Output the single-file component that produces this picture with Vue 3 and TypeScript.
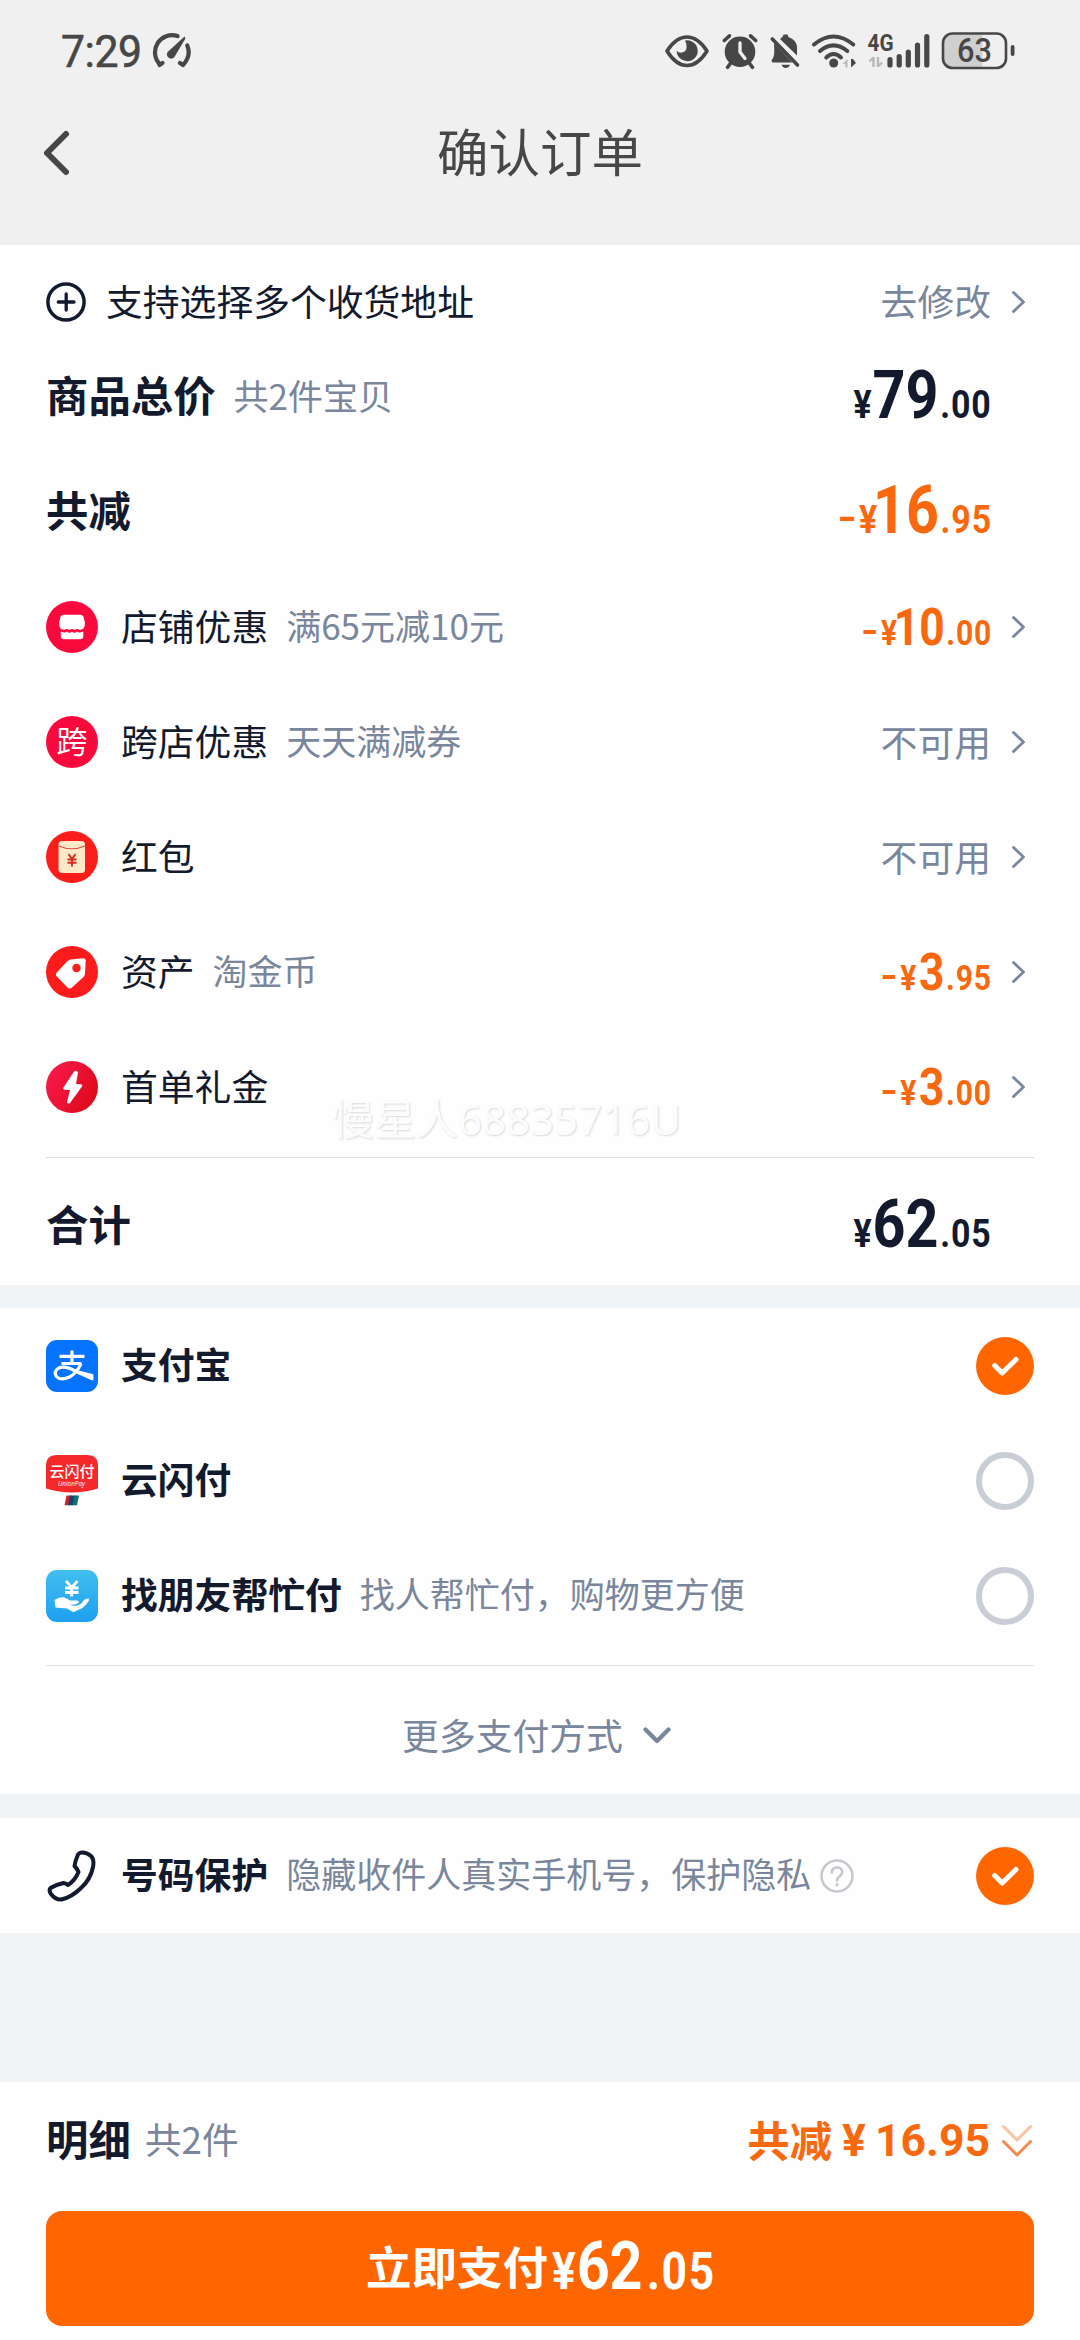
<script setup lang="ts">
interface Amount {
  sign?: string
  int: string
  dec: string
}

interface DiscountRow {
  icon: 'shop' | 'cross' | 'packet' | 'tag' | 'bolt'
  label: string
  note?: string
  amount?: Amount
  status?: string
}

interface PayRow {
  icon: 'alipay' | 'unionpay' | 'friend'
  label: string
  note?: string
  checked: boolean
}

const discounts: DiscountRow[] = [
  { icon: 'shop', label: '店铺优惠', note: '满65元减10元', amount: { sign: '-', int: '10', dec: '.00' } },
  { icon: 'cross', label: '跨店优惠', note: '天天满减券', status: '不可用' },
  { icon: 'packet', label: '红包', status: '不可用' },
  { icon: 'tag', label: '资产', note: '淘金币', amount: { sign: '-', int: '3', dec: '.95' } },
  { icon: 'bolt', label: '首单礼金', amount: { sign: '-', int: '3', dec: '.00' } },
]

const payments: PayRow[] = [
  { icon: 'alipay', label: '支付宝', checked: true },
  { icon: 'unionpay', label: '云闪付', checked: false },
  { icon: 'friend', label: '找朋友帮忙付', note: '找人帮忙付，购物更方便', checked: false },
]
</script>

<template>
  <div class="page">
    <header class="header">
      <div class="status-bar">
        <span class="clock">7:29</span>
        <svg class="gauge" width="40" height="36" viewBox="0 0 40 36" fill="none">
          <path d="M9 32.5 A17.2 17.2 0 0 1 26.5 4" stroke="#474747" stroke-width="4.2" stroke-linecap="round" />
          <path d="M8.5 33 L11.5 31" stroke="#474747" stroke-width="4.2" stroke-linecap="round" />
          <path d="M36.3 13.5 Q40.5 24 32 33 L29 31" stroke="#474747" stroke-width="4.2" stroke-linecap="round" stroke-linejoin="round" />
          <path d="M33.5 4.5 Q35 6 34 7.2 L24 24 A4.2 4.2 0 1 1 18 18.8 Z" fill="#474747" />
        </svg>
        <span class="spacer"></span>
        <svg class="indicators" width="355" height="48" viewBox="0 -5 355 48" fill="none">
          <!-- eye -->
          <path d="M3 19 Q12 5 23 5 Q34 5 43 19 Q34 33.500 23 33.500 Q12 33.500 3 19Z" stroke="#474747" stroke-width="3.600" stroke-linejoin="round" />
          <path d="M21 8.500 A10.500 10.500 0 1 1 12.700 18.500 C15.500 22.500 22 20.500 22.500 16 Q23 11.500 21 8.500Z" fill="#474747" />
          <!-- alarm -->
          <circle cx="76" cy="19.800" r="15.300" fill="#474747" />
          <path d="M60.300 8.500 L65.500 3.800 M91.700 8.500 L86.500 3.800 M66 32 L63.500 35.300 M86 32 L88.500 35.300" stroke="#474747" stroke-width="3.600" stroke-linecap="round" />
          <path d="M76 11 V20 L81 26.500" stroke="#f0f0f0" stroke-width="3.300" stroke-linecap="round" stroke-linejoin="round" />
          <!-- muted bell -->
          <path d="M110 11 L128.500 30.500 H108.500 Q106.500 28.500 108.500 27 Q111 24 110 11Z" fill="#474747" />
          <path d="M116 7 Q119 5 119.800 2.500 H123.500 L124.500 5 Q132.500 8 133 15 V23.500Z" fill="#474747" />
          <path d="M117.500 32.800 H126 Q124.500 36 121.700 36 Q119 36 117.500 32.800Z" fill="#474747" />
          <path d="M108.300 7 L133.500 33" stroke="#474747" stroke-width="3.600" stroke-linecap="round" />
          <!-- wifi -->
          <path d="M150 12.500 Q169.500 -3.500 189.300 12.500" stroke="#474747" stroke-width="4" stroke-linecap="round" />
          <path d="M156 19 Q169.500 7.800 183.300 19" stroke="#474747" stroke-width="4" stroke-linecap="round" />
          <path d="M162.300 25.500 Q169.500 18.500 177 25.500" stroke="#474747" stroke-width="4" stroke-linecap="round" />
          <circle cx="169.700" cy="31" r="4.500" fill="#474747" />
          <path d="M183.500 27 V35.500 H181.500 V32 H178.500Z" fill="#b8b8b8" />
          <path d="M187 35.500 V27 H189 L192 31Z" fill="#474747" />
          <!-- mobile signal -->
          <text x="203.500" y="18.700" class="net" textLength="26" lengthAdjust="spacingAndGlyphs">4G</text>
          <path d="M209.500 25 V35 M209.500 25.500 L205.500 29.500 M214 25 V35 M214 34.500 L218 30.500" stroke="#b8b8b8" stroke-width="2.400" />
          <path d="M226 27.500 V33 M235.200 24.500 V33 M244.300 20 V33 M253.500 13 V33 M262.800 4.500 V33" stroke="#474747" stroke-width="5.200" stroke-linecap="round" />
          <!-- battery -->
          <path d="M289 2.500 H318.500 V35 H289 Q280 35 280 27 V10.500 Q280 2.500 289 2.500Z" fill="#cfcfcf" />
          <rect x="279" y="1.500" width="63" height="34.500" rx="9.500" stroke="#474747" stroke-width="2.600" />
          <rect x="346.700" y="13" width="3.800" height="11" rx="1.900" fill="#474747" />
          <text x="293" y="30.300" class="level" textLength="35" lengthAdjust="spacingAndGlyphs">63</text>
        </svg>
      </div>
      <div class="title-bar">
        <svg class="back" width="34" height="52" viewBox="0 0 34 52" fill="none">
          <path d="M26 7 L7 26 L26 45" stroke="#474747" stroke-width="6" stroke-linecap="round" stroke-linejoin="round" />
        </svg>
        <h1 class="title">确认订单</h1>
      </div>
    </header>

    <section class="card summary">
      <div class="row address">
        <svg class="plus" width="40" height="40" viewBox="0 0 40 40" fill="none" stroke="#131a2d" stroke-linecap="round">
          <circle cx="20" cy="20" r="18.100" stroke-width="3.500" />
          <path d="M12.300 20 H28 M20.200 12 V28" stroke-width="3.300" />
        </svg>
        <span class="label">支持选择多个收货地址</span>
        <span class="spacer"></span>
        <span class="muted">去修改</span>
        <svg class="chev" width="16" height="24" viewBox="0 0 16 24" fill="none"><path d="M2.500 2.500 L12.500 12 L2.500 21.500" /></svg>
      </div>

      <div class="row">
        <span class="heading">商品总价</span>
        <span class="note">共2件宝贝</span>
        <span class="spacer"></span>
        <span class="amount large"><i class="yen">¥</i><b class="int">79</b><i class="dec">.00</i></span>
      </div>
      <div class="row">
        <span class="heading">共减</span>
        <span class="spacer"></span>
        <span class="amount large off"><i class="sign">-</i><i class="yen">¥</i><b class="int lead-one">16</b><i class="dec">.95</i></span>
      </div>

      <div v-for="row in discounts" :key="row.label" class="row">
        <svg class="icon" width="52" height="52" viewBox="0 0 52 52" fill="none">
          <template v-if="row.icon === 'shop'">
            <circle cx="26" cy="26" r="26" fill="#fa0a3c" />
            <path d="M18 13.800 H34 Q37 13.800 37.600 16.500 L38.800 21 Q39.500 27.500 35.500 28.500 Q33.500 29.500 31 27.700 Q28.500 30 26 27.700 Q23.500 30 21 27.700 Q18.500 29.500 16.500 28.500 Q12.500 27.500 13.200 21 L14.400 16.500 Q15 13.800 18 13.800Z" fill="#fff" />
            <path d="M14.800 30.500 H15.500 Q18.500 32.300 21 30.500 Q23.500 32.800 26 30.700 Q28.500 32.800 31 30.500 Q33.500 32.300 36.500 30.500 H37.300 V35 Q37.300 38.300 34 38.300 H18 Q14.800 38.300 14.800 35Z" fill="#fff" />
          </template>
          <template v-else-if="row.icon === 'cross'">
            <circle cx="26" cy="26" r="26" fill="#fa0a3c" />
            <text x="26" y="37" class="glyph">跨</text>
          </template>
          <template v-else-if="row.icon === 'packet'">
            <circle cx="26" cy="26" r="26" fill="#fb1d1a" />
            <rect x="12.500" y="10" width="26.500" height="32" rx="3.500" fill="#fee9c8" />
            <path d="M12.500 15 Q26 20.500 39 15" stroke="#d9503a" stroke-width="1.200" />
            <path d="M22.500 23 L26 28 L29.500 23 M26 28 V35.500 M21.500 28.500 H30.500 M21.500 31.800 H30.500" stroke="#d92a1c" stroke-width="1.900" />
          </template>
          <template v-else-if="row.icon === 'tag'">
            <circle cx="26" cy="26" r="26" fill="#fd1b1b" />
            <path d="M24.500 13.500 L37 12.300 Q39.800 12.300 39.700 15 L39 27.500 Q38.800 29.500 37.500 31 L26 41.500 Q23.500 43.700 21.500 41.500 L10.800 30.500 Q8.800 28.500 11 26.300 L21 15.500 Q22.500 13.800 24.500 13.500Z" fill="#fff" />
            <circle cx="30.500" cy="22" r="4.200" fill="#fd1b1b" />
          </template>
          <template v-else>
            <defs>
              <linearGradient id="boltBg" x1="0" y1="0" x2="1" y2="0.500">
                <stop offset="0" stop-color="#fb1c52" />
                <stop offset="1" stop-color="#df0a1d" />
              </linearGradient>
            </defs>
            <circle cx="26" cy="26" r="26" fill="url(#boltBg)" />
            <path d="M28 10.500 L17.500 26.500 Q16.500 28.500 18.500 28.800 L24 29 L21 41 Q21.500 43.500 24 42 L36 25.500 Q37 23.700 35 23.300 L30 23 L32 11.500 Q31 8.500 28 10.500Z" fill="#fff" />
          </template>
        </svg>
        <span class="label">{{ row.label }}</span>
        <span v-if="row.note" class="note">{{ row.note }}</span>
        <span class="spacer"></span>
        <span v-if="row.amount" class="amount off"><i class="sign">{{ row.amount.sign }}</i><i class="yen">¥</i><b class="int" :class="{ 'lead-one': row.amount.int.startsWith('1') }">{{ row.amount.int }}</b><i class="dec">{{ row.amount.dec }}</i></span>
        <span v-else class="muted low">{{ row.status }}</span>
        <svg class="chev" width="16" height="24" viewBox="0 0 16 24" fill="none"><path d="M2.500 2.500 L12.500 12 L2.500 21.500" /></svg>
      </div>

      <div class="rule"></div>
      <div class="row total">
        <span class="heading">合计</span>
        <span class="spacer"></span>
        <span class="amount large"><i class="yen">¥</i><b class="int">62</b><i class="dec">.05</i></span>
      </div>
      <span class="watermark">慢星人68835716U</span>
    </section>

    <section class="card payment">
      <div v-for="row in payments" :key="row.label" class="row">
        <svg class="icon" width="52" height="52" viewBox="0 0 52 52" fill="none">
          <template v-if="row.icon === 'alipay'">
            <rect width="52" height="52" rx="11" fill="#0673fe" />
            <path d="M13.500 16.300 H38.500 M26 10.500 V23 M15.500 23.500 H35.500" stroke="#fff" stroke-width="3.200" />
            <path d="M35 23.500 Q31 33 23.500 37 Q14.500 41 10.300 36.500 Q7.500 31.500 12 28.500 Q18.500 25 29 31 L47 39" stroke="#fff" stroke-width="3.200" />
            <path d="M29 29.500 L47.300 34.300 V40.500 L30 32.500Z" fill="#fff" />
          </template>
          <template v-else-if="row.icon === 'unionpay'">
            <path d="M11 0 H41 Q52 0 52 11 V33.500 Q26 41.500 0 33.500 V11 Q0 0 11 0Z" fill="#f5282a" />
            <text x="26" y="21.500" class="up-name">云闪付</text>
            <text x="12" y="30.500" class="up-sub" textLength="27" lengthAdjust="spacingAndGlyphs">UnionPay</text>
            <path d="M20.500 40.500 H25.500 L23.500 50.300 H18.500Z" fill="#c9252b" />
            <path d="M24 40.500 H29.500 L27.500 50.300 H22Z" fill="#1b3f73" />
            <path d="M28.500 40.500 H33 L31 50.300 H26.500Z" fill="#08766f" />
          </template>
          <template v-else>
            <defs>
              <linearGradient id="friendBg" x1="0" y1="0" x2="0" y2="1">
                <stop offset="0" stop-color="#41bfee" />
                <stop offset="1" stop-color="#1e9ff0" />
              </linearGradient>
            </defs>
            <rect width="52" height="52" rx="11" fill="url(#friendBg)" />
            <path d="M20 11 L25.700 17.500 L31.500 11 M25.700 17.500 V26.500 M19 18 H32.500 M19 22.500 H32.500" stroke="#fff" stroke-width="2.800" />
            <path d="M8.500 30 Q13 26.500 18.500 27.500 L24 30.500 H31 Q33.500 31 32.500 33 Q29 35.300 23.500 34.500 Q30 37.500 35.500 33.500 Q38 28.500 42.500 28.300 L43 30.500 Q38 38 33 39.500 L27.500 42.300 L21 38.500 L9.500 37.500Z" fill="#fff" />
          </template>
        </svg>
        <span class="label strong">{{ row.label }}</span>
        <span v-if="row.note" class="note">{{ row.note }}</span>
        <span class="spacer"></span>
        <span class="radio" :class="{ on: row.checked }">
          <svg v-if="row.checked" width="58" height="58" viewBox="0 0 58 58" fill="none"><path d="M18.700 28.500 L26.200 36 L40 22.500" stroke="#fff" stroke-width="5" stroke-linecap="round" stroke-linejoin="round" /></svg>
        </span>
      </div>
      <div class="rule"></div>
      <div class="more">
        <span class="muted">更多支付方式</span>
        <svg width="32" height="22" viewBox="0 0 32 22" fill="none"><path d="M4.500 4.500 L16 16 L27.500 4.500" stroke="#7a869c" stroke-width="4.300" stroke-linecap="round" stroke-linejoin="round" /></svg>
      </div>
    </section>

    <section class="card privacy">
      <div class="row">
        <svg class="icon" width="52" height="52" viewBox="0 0 52 52" fill="none">
          <path d="M34.500 2.700 Q40 1.800 45 6 Q48.500 9.500 47 17 Q44.500 29.500 35 38 Q26 47 15.500 49.500 Q9.500 50 5 44 Q2.500 40.500 4.500 38 Q10 34.500 17.500 33 Q20.500 33.500 22 35 Q29 30.500 32.500 22 Q31 18.500 28.500 16 Q29.500 10 32 4.500 Q33 3 34.500 2.700Z" stroke="#131a2d" stroke-width="4" stroke-linejoin="round" />
        </svg>
        <span class="label strong">号码保护</span>
        <span class="note">隐藏收件人真实手机号，保护隐私</span>
        <svg class="help" width="34" height="34" viewBox="0 0 34 34" fill="none" stroke="#c5c8cd">
          <circle cx="17" cy="17" r="15.500" stroke-width="2.500" />
          <path d="M11.800 13.500 Q12 8.500 17 8.500 Q22 8.500 22.200 13 Q22.200 15.500 19 17.700 Q17 19 17 21.500" stroke-width="2.500" stroke-linecap="round" />
          <circle cx="17" cy="25.700" r="1" stroke-width="1.500" />
        </svg>
        <span class="spacer"></span>
        <span class="radio on">
          <svg width="58" height="58" viewBox="0 0 58 58" fill="none"><path d="M18.700 28.500 L26.200 36 L40 22.500" stroke="#fff" stroke-width="5" stroke-linecap="round" stroke-linejoin="round" /></svg>
        </span>
      </div>
    </section>

    <footer class="footer">
      <div class="detail">
        <span class="heading">明细</span>
        <span class="count">共2件</span>
        <span class="spacer"></span>
        <span class="saved">共减</span><span class="saved-yen">¥</span><span class="saved-num">16.95</span>
        <svg class="double" width="34" height="36" viewBox="0 0 34 36" fill="none" stroke-width="3" stroke-linecap="round" stroke-linejoin="round">
          <path d="M3.500 3.500 L17 17 L30.500 3.500" stroke="#fbc1a0" />
          <path d="M3.500 18.500 L17 32 L30.500 18.500" stroke="#f58a4e" />
        </svg>
      </div>
      <button class="pay" type="button">
        <span class="pay-label">立即支付</span>
        <span class="amount pay-amount"><i class="yen">¥</i><b class="int">62</b><i class="dec">.05</i></span>
      </button>
    </footer>
  </div>
</template>

<style>
body {
  background: #f0f4f7;
}
</style>

<style scoped>
.page {
  width: 1080px;
  height: 2340px;
  overflow: hidden;
  display: flex;
  flex-direction: column;
  background: #f0f4f7;
  font-family: "Noto Sans CJK SC", sans-serif;
  color: #131a2d;
}
.spacer { flex: 1; }

.header {
  height: 245px;
  flex: none;
  background: #f0f0f0;
  color: #474747;
}
.status-bar {
  height: 101px;
  display: flex;
  align-items: center;
  padding: 0 61px;
}
.clock {
  width: 90px;
  padding-top: 2px;
  font: 400 45px/60px Roboto, sans-serif;
  letter-spacing: -0.5px;
  -webkit-text-stroke: 0.6px #474747;
  transform: scaleX(0.95);
  transform-origin: left;
}
.gauge { margin-top: -1px; }
.indicators { flex: none; overflow: visible; }
.net { font: 700 23px Roboto, sans-serif; fill: #474747; }
.level { font: 500 33px Roboto, sans-serif; fill: #474747; }
.title-bar {
  height: 104px;
  display: flex;
  align-items: center;
  padding-left: 40px;
}
.title {
  flex: none;
  width: 1000px;
  margin: 0 0 0 -34px;
  padding-bottom: 6px;
  text-align: center;
  font-size: 51.5px;
  line-height: 98px;
  font-weight: 400;
}
.back { flex: none; }

.card { background: #fefefe; flex: none; }
.summary { position: relative; height: 1040px; }
.payment { height: 486px; margin-top: 23px; }
.privacy { height: 115px; margin-top: 24px; }

.row {
  box-sizing: border-box;
  height: 115px;
  padding: 0 46px;
  display: flex;
  align-items: center;
  white-space: nowrap;
}
.row.address { height: 94.5px; padding-top: 20px; }
.row.total { height: 136px; }
.plus { margin-right: 20px; }
.icon { flex: none; margin-right: 23px; }
.label { padding-bottom: 5px; font-size: 36.8px; line-height: 54px; }
.strong { font-weight: 700; }
.heading { padding-bottom: 6px; font-size: 42.4px; line-height: 60px; font-weight: 700; }
.note { margin-left: 18px; padding-bottom: 5px; font-size: 35px; line-height: 50px; color: #7a869c; }
.muted { padding-bottom: 4px; font-size: 36.8px; line-height: 54px; color: #7a869c; }
.low { padding-bottom: 2px; }
.chev { margin-left: 20px; margin-right: 7px; }
.chev path { stroke: #7a869c; stroke-width: 2.8; stroke-linecap: round; stroke-linejoin: round; }

/* Narrow numerals: the big integer part shares a baseline with its smaller parts */
.amount {
  display: flex;
  align-items: baseline;
  padding-top: 7px;
  font-family: Roboto, sans-serif;
  font-weight: 700;
  line-height: 60px;
  transform: scaleX(0.87);
  transform-origin: right;
}
.amount i { font-style: normal; font-size: 34.5px; }
.amount .int { margin-left: 3px; font-size: 51px; font-weight: 700; }
.amount .int.lead-one { margin-left: -4px; }
.amount .dec { letter-spacing: 1px; margin: 0 -1px 0 2px; }
.amount .sign { margin-right: 6px; transform: translateY(-2px) scaleX(1.5); }
.amount.large i { font-size: 39px; }
.amount.large .int { margin-left: 1px; font-size: 66px; }
.amount.large .int.lead-one { margin-left: -5px; }
.amount.large { margin-right: 43px; }
.off { color: #f8690f; }

.rule { height: 1px; margin: 12px 46px 0; background: #dee1e4; }

.watermark {
  position: absolute;
  left: 332px;
  top: 844px;
  font: 400 42px/60px "Noto Sans", "Noto Sans CJK SC", sans-serif;
  color: #fcfcfc;
  text-shadow: 1px 1px 2px #d9d9d9;
  white-space: nowrap;
}

.radio {
  box-sizing: border-box;
  width: 58px;
  height: 58px;
  border-radius: 50%;
  border: 6px solid #c9ced6;
}
.radio.on { border: 0; background: #ff6600; }
.radio svg { display: block; }
.more {
  height: 127px;
  padding: 6px 5px 0 0;
  display: flex;
  align-items: center;
  justify-content: center;
  gap: 18px;
}
.help { margin-left: 9px; }

.glyph { font: 400 31px "Noto Sans CJK SC", sans-serif; fill: #fff; text-anchor: middle; }
.up-name { font: 500 15px "Noto Sans CJK SC", sans-serif; fill: #fff; text-anchor: middle; }
.up-sub { font: italic 400 7px "Open Sans", sans-serif; fill: #fff; }

.footer { margin-top: auto; height: 258px; background: #fefefe; }
.detail {
  height: 117px;
  padding: 0 46px 12px;
  display: flex;
  align-items: center;
}
.count { margin-left: 14px; padding-bottom: 5px; font-size: 36.8px; color: #7a869c; }
.saved { padding-bottom: 5px; font-size: 42.4px; font-weight: 700; color: #f8690f; }
.saved-yen, .saved-num { font: 700 44.500px/60px Roboto, sans-serif; color: #f8690f; }
.saved-yen { margin-left: 10px; }
.saved-num { margin-left: 9px; }
.double { margin-left: 10px; }
.pay {
  display: flex;
  align-items: center;
  box-sizing: border-box;
  width: 988px;
  height: 115px;
  margin: 0 46px;
  padding: 0 0 0 320px;
  border: 0;
  border-radius: 16px;
  background: #ff6600;
  color: #fff;
}
.pay-label { padding-bottom: 8px; font: 700 45.500px/66px "Noto Sans CJK SC", sans-serif; }
.amount.pay-amount { transform-origin: left; margin-left: 4px; padding-top: 2px; }
.amount.pay-amount i { font-size: 51px; }
.amount.pay-amount .int { margin-left: 1px; font-size: 66px; }
.amount.pay-amount .dec { margin-left: 5px; letter-spacing: 2px; }
</style>
